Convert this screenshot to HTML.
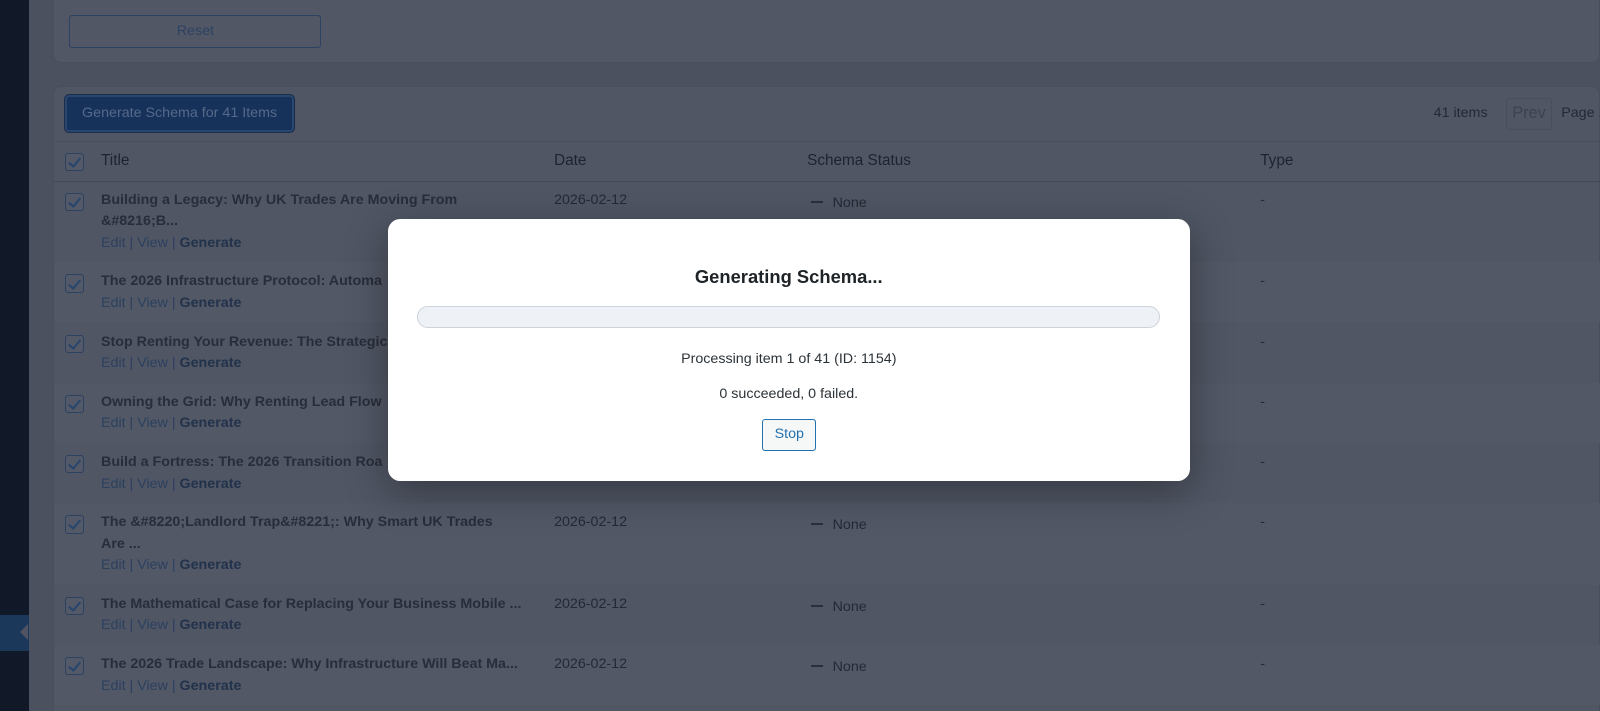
<!DOCTYPE html>
<html><head><meta charset="utf-8"><style>
*{box-sizing:border-box;margin:0;padding:0}
html,body{width:1600px;height:711px;overflow:hidden;background:#4c5160}
body{font-family:"Liberation Sans",Arial,sans-serif;position:relative}
#w{position:absolute;left:0;top:0;width:1568px;height:697px;zoom:1.0204}
.sb{position:absolute;left:0;top:0;width:28px;height:720px;background:#111828}
.sbi{position:absolute;left:0;top:603px;width:28px;height:35px;background:#1b375a}
.sba{position:absolute;left:20px;top:612px;width:0;height:0;border-top:8px solid transparent;border-bottom:8px solid transparent;border-right:8px solid #4f5463}
.panel{position:absolute;left:52px;right:0;background:#515765;border:1px solid #494e5b;border-radius:8px}
.inp{position:absolute;top:-10px;height:13px;border:1px solid #464b58;border-radius:5px;background:#535967}
.reset{position:absolute;left:68px;top:15px;width:247px;height:32px;border:1px solid #2c4262;border-radius:3px;color:#2c4262;font-size:14px;text-align:center;line-height:30px}
.gen{position:absolute;left:64px;top:93px;width:224px;height:36px;background:#16325a;border:2px solid #28466e;border-radius:4px;color:#56698a;font-size:14px;line-height:32px;text-align:center;box-shadow:0 0 0 1px #1a2d4a}
.t{position:absolute;font-size:14px;color:#242935;white-space:nowrap}
.h{font-size:15px;color:#1e2330}
.b{font-weight:bold;color:#282d3a}
.cb{position:absolute;left:64px;width:18px;height:18px;border:1px solid #2c4262;border-radius:3px;background:#535967}
.cb:after{content:"";position:absolute;left:5px;top:1px;width:5px;height:10px;border:solid #28456e;border-width:0 2px 2px 0;transform:rotate(40deg)}
.ln{color:#2b405f}
.ln b{color:#22324b}
.line{position:absolute;left:53px;right:0;height:1px;background:#494e5b}
.row{position:absolute;left:53px;right:0}
.dash{display:inline-block;width:12px;height:2px;background:#2a2f3c;vertical-align:4px;margin-right:9px}
.modal{position:absolute;left:380px;top:215px;width:786px;height:256px;background:#fff;border-radius:12px;box-shadow:0 10px 40px rgba(0,0,0,.35);text-align:center}
.modal h2{position:absolute;top:46px;left:0;right:0;font-size:18px;font-weight:bold;color:#1d2327}
.bar{position:absolute;left:29px;top:85px;width:728px;height:21px;background:#eef1f5;border:1px solid #cdd3db;border-radius:11px}
.mt{position:absolute;left:0;right:0;font-size:14px;color:#2c3338}
.stop{position:absolute;left:367px;top:196px;width:53px;height:31px;border:1px solid #2271b1;border-radius:3px;background:#f6f7f7;color:#2271b1;font-size:14px;line-height:29px}
</style></head><body><div id="w">
<div class="sb"></div><div class="sbi"></div><div class="sba"></div>
<div class="panel" style="top:-10px;height:72px">
<div class="inp" style="left:284px;width:243px"></div>
<div class="inp" style="left:547px;width:294px"></div>
<div class="inp" style="left:861px;width:244px"></div>
<div class="inp" style="left:1123px;width:243px"></div>
<div class="inp" style="left:1387px;width:115px"></div>
</div>
<div class="reset">Reset</div>
<div class="panel" style="top:84px;height:640px;background:#505664"></div>
<div class="gen">Generate Schema for 41 Items</div>
<div class="t" style="left:1405px;top:103px;color:#242936">41 items</div>
<div style="position:absolute;left:1476px;top:96px;width:45px;height:31px;border:1px solid #494e5b;border-radius:3px;color:#3c4250;font-size:16px;line-height:29px;text-align:center">Prev</div>
<div class="t" style="left:1530px;top:103px;color:#242936">Page 1</div>
<div class="line" style="top:138px"></div>
<div class="line" style="top:177px;background:#444956"></div>
<div class="cb" style="top:150px"></div>
<div class="t h" style="left:99px;top:149px">Title</div>
<div class="t h" style="left:543px;top:149px">Date</div>
<div class="t h" style="left:791px;top:149px">Schema Status</div>
<div class="t h" style="left:1235px;top:149px">Type</div>

<div class="row" style="top:257px;height:59px;background:#525866"></div>
<div class="row" style="top:375px;height:59px;background:#525866"></div>
<div class="row" style="top:493px;height:80px;background:#525866"></div>
<div class="row" style="top:632px;height:59px;background:#525866"></div>

<div class="cb" style="top:189px"></div>
<div class="t b" style="left:99px;top:188px">Building a Legacy: Why UK Trades Are Moving From</div>
<div class="t b" style="left:99px;top:209px">&amp;#8216;B...</div>
<div class="t ln" style="left:99px;top:230px">Edit | View | <b>Generate</b></div>
<div class="t" style="left:543px;top:188px">2026-02-12</div>
<div class="t" style="left:795px;top:191px"><span class="dash"></span>None</div>
<div class="t" style="left:1235px;top:188px">-</div>

<div class="cb" style="top:269px"></div>
<div class="t b" style="left:99px;top:268px">The 2026 Infrastructure Protocol: Automa</div>
<div class="t ln" style="left:99px;top:289px">Edit | View | <b>Generate</b></div>
<div class="t" style="left:1235px;top:268px">-</div>

<div class="cb" style="top:328px"></div>
<div class="t b" style="left:99px;top:327px">Stop Renting Your Revenue: The Strategic</div>
<div class="t ln" style="left:99px;top:348px">Edit | View | <b>Generate</b></div>
<div class="t" style="left:1235px;top:327px">-</div>

<div class="cb" style="top:387px"></div>
<div class="t b" style="left:99px;top:386px">Owning the Grid: Why Renting Lead Flow</div>
<div class="t ln" style="left:99px;top:407px">Edit | View | <b>Generate</b></div>
<div class="t" style="left:1235px;top:386px">-</div>

<div class="cb" style="top:446px"></div>
<div class="t b" style="left:99px;top:445px">Build a Fortress: The 2026 Transition Roa</div>
<div class="t ln" style="left:99px;top:466px">Edit | View | <b>Generate</b></div>
<div class="t" style="left:1235px;top:445px">-</div>

<div class="cb" style="top:505px"></div>
<div class="t b" style="left:99px;top:504px">The &amp;#8220;Landlord Trap&amp;#8221;: Why Smart UK Trades</div>
<div class="t b" style="left:99px;top:525px">Are ...</div>
<div class="t ln" style="left:99px;top:546px">Edit | View | <b>Generate</b></div>
<div class="t" style="left:543px;top:504px">2026-02-12</div>
<div class="t" style="left:795px;top:507px"><span class="dash"></span>None</div>
<div class="t" style="left:1235px;top:504px">-</div>

<div class="cb" style="top:585px"></div>
<div class="t b" style="left:99px;top:584px">The Mathematical Case for Replacing Your Business Mobile ...</div>
<div class="t ln" style="left:99px;top:605px">Edit | View | <b>Generate</b></div>
<div class="t" style="left:543px;top:584px">2026-02-12</div>
<div class="t" style="left:795px;top:587px"><span class="dash"></span>None</div>
<div class="t" style="left:1235px;top:584px">-</div>

<div class="cb" style="top:644px"></div>
<div class="t b" style="left:99px;top:643px">The 2026 Trade Landscape: Why Infrastructure Will Beat Ma...</div>
<div class="t ln" style="left:99px;top:664px">Edit | View | <b>Generate</b></div>
<div class="t" style="left:543px;top:643px">2026-02-12</div>
<div class="t" style="left:795px;top:646px"><span class="dash"></span>None</div>
<div class="t" style="left:1235px;top:643px">-</div>

<div class="modal">
<h2>Generating Schema...</h2>
<div class="bar"></div>
<div class="mt" style="top:129px">Processing item 1 of 41 (ID: 1154)</div>
<div class="mt" style="top:163px">0 succeeded, 0 failed.</div>
<div class="stop">Stop</div>
</div>
</div></body></html>
